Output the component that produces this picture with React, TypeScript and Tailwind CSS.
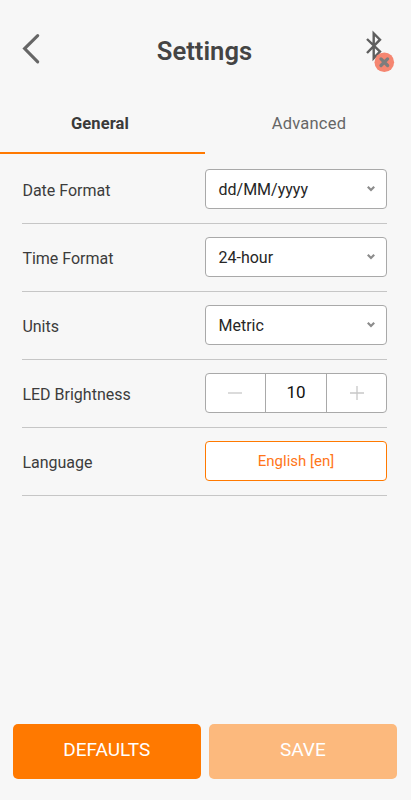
import React, { useState } from 'react';

const ChevronIcon = () => (
  <svg width="10" height="7" viewBox="0 0 10 7" fill="none" stroke="#8c8c8c" strokeWidth="2.2">
    <path d="M1.8 0.8 5 4l3.2-3.2" />
  </svg>
);

const BackIcon = () => (
  <svg width="18" height="32" viewBox="0 0 18 32" fill="none" stroke="#666" strokeWidth="3.1" strokeLinecap="round">
    <path d="M15.7 2.6 2.6 15.6l13.1 13.2" />
  </svg>
);

// Bluetooth symbol with a "not connected" badge
const BluetoothStatus = () => (
  <svg width="30" height="44" viewBox="0 0 30 44" fill="none">
    <path d="m2 11 13 12.6-6.3 6.6V5.4l6.3 6.3L2 25" stroke="#5e5e5e" strokeWidth="2.4" />
    <circle cx="19.3" cy="34.2" r="9.8" fill="#f58671" />
    <path d="m16 30.9 6.6 6.6m0-6.6L16 37.5" stroke="#7d7d7d" strokeWidth="3.3" strokeLinecap="round" />
  </svg>
);

interface RowProps {
  label: string;
  children: React.ReactNode;
}

const SettingRow: React.FC<RowProps> = ({ label, children }) => (
  <div className="flex h-[68px] items-start justify-between border-b border-[#c6c6c6] pt-[13px]">
    <span className="flex h-10 items-center pt-[3px] pl-[0.4px] text-[16px] text-[#3c3c3c]">{label}</span>
    {children}
  </div>
);

const SelectBox: React.FC<{ value: string }> = ({ value }) => (
  <button className="flex h-10 w-[182px] items-center justify-between rounded border border-[#a9a9a9] bg-white pr-[10px] pl-[12.5px] text-[16px] text-[#262626]">
    <span className="pt-px">{value}</span>
    <ChevronIcon />
  </button>
);

const App: React.FC = () => {
  const [tab, setTab] = useState('General');
  const [brightness, setBrightness] = useState(10);

  return (
    <div className="flex h-[800px] w-[411px] flex-col overflow-hidden bg-[#f7f7f7] font-['Roboto',sans-serif]">
      {/* Header */}
      <header className="flex h-[96px] shrink-0 items-start justify-between pr-[16px] pl-[22px]">
        <button aria-label="Back" className="mt-[33px] w-[30px]">
          <BackIcon />
        </button>
        <h1 className="mt-[32px] mr-[8px] text-[25.6px] leading-[38px] font-semibold text-[#444]">Settings</h1>
        <div className="mt-[28px]">
          <BluetoothStatus />
        </div>
      </header>

      {/* Tabs */}
      <nav className="flex h-[58px] shrink-0">
        {['General', 'Advanced'].map((name) => (
          <button
            key={name}
            onClick={() => setTab(name)}
            className={`flex w-[205px] items-center justify-center border-b-2 text-[16.5px] ${
              tab === name
                ? 'border-[#ff7900] pr-[5px] font-bold tracking-[0.1px] text-[#3a3a3a]'
                : 'border-transparent pl-[3px] tracking-[0.2px] text-[#666]'
            }`}
          >
            {name}
          </button>
        ))}
      </nav>

      {/* Settings list */}
      <main className="mt-[2px] mr-[24px] ml-[22px] flex-1">
        <SettingRow label="Date Format">
          <SelectBox value="dd/MM/yyyy" />
        </SettingRow>
        <SettingRow label="Time Format">
          <SelectBox value="24-hour" />
        </SettingRow>
        <SettingRow label="Units">
          <SelectBox value="Metric" />
        </SettingRow>
        <SettingRow label="LED Brightness">
          <div className="flex h-10 w-[182px] rounded border border-[#a9a9a9] bg-white">
            <button
              aria-label="Decrease"
              onClick={() => setBrightness(brightness - 1)}
              className="flex w-[59px] items-center justify-center pr-px"
            >
              <svg width="14" height="14" viewBox="0 0 14 14" stroke="#c8c8c8" strokeWidth="1.3">
                <path d="M0 7h14" />
              </svg>
            </button>
            <span className="flex w-[62px] items-center justify-center border-x border-[#a9a9a9] text-[17px] text-[#111]">
              {brightness}
            </span>
            <button
              aria-label="Increase"
              onClick={() => setBrightness(brightness + 1)}
              className="flex flex-1 items-center justify-center"
            >
              <svg width="14" height="14" viewBox="0 0 14 14" stroke="#c8c8c8" strokeWidth="1.3">
                <path d="M0 7h14M7 0v14" />
              </svg>
            </button>
          </div>
        </SettingRow>
        <SettingRow label="Language">
          <button className="flex h-10 w-[182px] items-center justify-center rounded border border-[#ff7900] bg-white pt-px text-[15px] text-[#ff7518]">
            English [en]
          </button>
        </SettingRow>
      </main>

      {/* Footer actions */}
      <footer className="flex h-[76px] shrink-0 gap-[8.4px] pr-[14.5px] pl-[12.8px] text-[19px] text-white">
        <button className="h-[55.4px] w-[188px] rounded-[5px] bg-[#ff7900] pb-[2px]">DEFAULTS</button>
        <button className="h-[55.4px] flex-1 rounded-[5px] bg-[#fcb97d] pb-[2px]">SAVE</button>
      </footer>
    </div>
  );
};

export default App;
